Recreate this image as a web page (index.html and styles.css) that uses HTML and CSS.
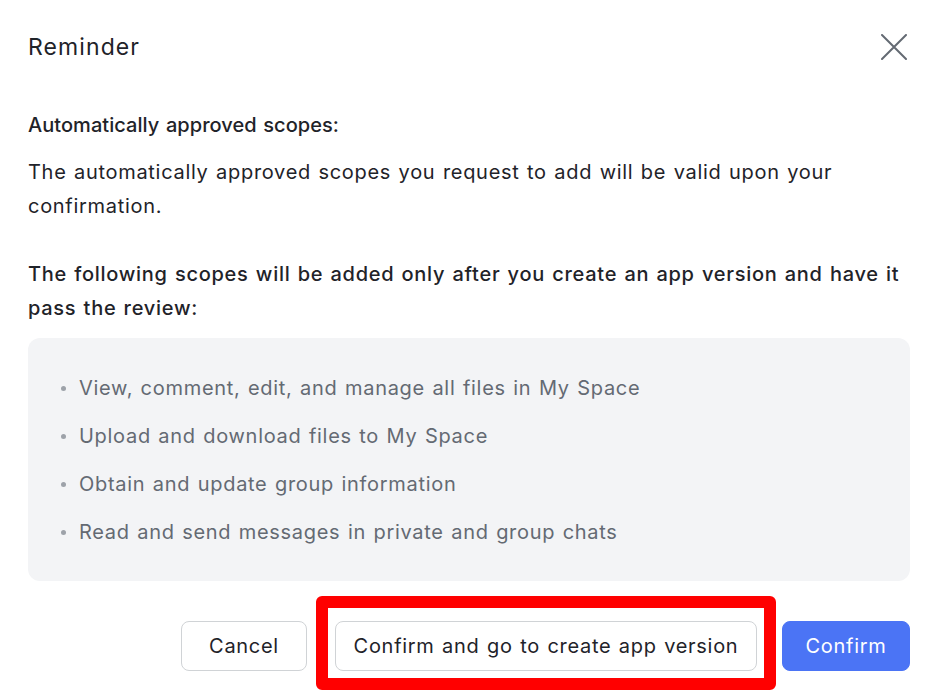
FILE: index.html
```html
<!DOCTYPE html>
<html lang="en">
<head>
<meta charset="utf-8">
<title>Reminder</title>
<link rel="stylesheet" href="styles.css">
</head>
<body>
<div class="dialog">
  <div class="header">
    <div class="title">Reminder</div>
    <button class="close" aria-label="Close">
      <svg width="26" height="26" viewBox="0 0 26 26" fill="none" stroke="#646a73" stroke-width="2" stroke-linecap="round"><path d="M1 1L25 25M25 1L1 25"/></svg>
    </button>
  </div>
  <div class="content">
    <p class="heading first">Automatically approved scopes:</p>
    <p class="text">The automatically approved scopes you request to add will be valid upon your confirmation.</p>
    <p class="heading gap">The following scopes will be added only after you create an app version and have it pass the review:</p>
    <ul class="scopes">
      <li>View, comment, edit, and manage all files in My Space</li>
      <li>Upload and download files to My Space</li>
      <li>Obtain and update group information</li>
      <li>Read and send messages in private and group chats</li>
    </ul>
  </div>
  <div class="footer">
    <button class="btn cancel">Cancel</button>
    <div class="highlight">
      <button class="btn create">Confirm and go to create app version</button>
    </div>
    <button class="btn primary">Confirm</button>
  </div>
</div>
</body>
</html>
```

FILE: styles.css
```css
* { box-sizing: border-box; }
html, body {
  margin: 0;
  padding: 0;
  background: #ffffff;
}
body {
  font-family: Inter, "Noto Sans", sans-serif;
  color: #1f2329;
  width: 940px;
  height: 694px;
  overflow: hidden;
  letter-spacing: 0.7px;
  word-spacing: 1.2px;
}
.dialog {
  padding: 24px 30px 0 28px;
}
.header {
  display: flex;
  align-items: center;
  justify-content: space-between;
  height: 46px;
}
.title {
  font-size: 23px;
  font-weight: 400;
  line-height: 46px;
  letter-spacing: 1.1px;
}
.close {
  border: 0;
  background: transparent;
  padding: 0;
  width: 26px;
  height: 26px;
  margin-right: 3px;
  display: flex;
}
.content {
  padding-top: 38px;
}
.content p {
  margin: 0;
  font-size: 20px;
  line-height: 34px;
}
.heading {
  font-weight: 500;
  letter-spacing: 0.72px;
}
.heading.first {
  letter-spacing: 0.05px;
}
.text {
  margin-top: 13px !important;
  color: #1f2329;
}
.heading.gap {
  margin-top: 34px !important;
}
.scopes {
  list-style: none;
  margin: 13px 0 0 0;
  padding: 26px 0 25px 51px;
  background: #f3f4f6;
  border-radius: 12px;
}
.scopes li {
  position: relative;
  font-size: 20px;
  line-height: 48px;
  color: #646a73;
}
.scopes li::before {
  content: "";
  position: absolute;
  left: -18px;
  top: 22px;
  width: 5px;
  height: 5px;
  border-radius: 50%;
  background: #9da2a9;
}
.footer {
  display: flex;
  justify-content: flex-end;
  align-items: center;
  margin-top: 40px;
  gap: 25px;
}
.btn {
  font-family: Inter, "Noto Sans", sans-serif;
  font-size: 20px;
  letter-spacing: 0.7px;
  word-spacing: 1.2px;
  height: 50px;
  padding: 0;
  border: 1px solid #d0d3d6;
  border-radius: 8px;
  background: #ffffff;
  color: #1f2329;
  text-align: center;
}
.btn.cancel {
  width: 126px;
  margin-right: 3px;
}
.btn.create {
  display: block;
  width: 422px;
}
.highlight {
  position: relative;
}
.highlight::after {
  content: "";
  position: absolute;
  left: -19px;
  right: -19px;
  top: -25px;
  bottom: -19px;
  border: 12px solid #ff0000;
  border-radius: 6px;
  pointer-events: none;
}
.btn.primary {
  width: 128px;
  background: #4b74f5;
  border-color: #4b74f5;
  color: #ffffff;
}
```
